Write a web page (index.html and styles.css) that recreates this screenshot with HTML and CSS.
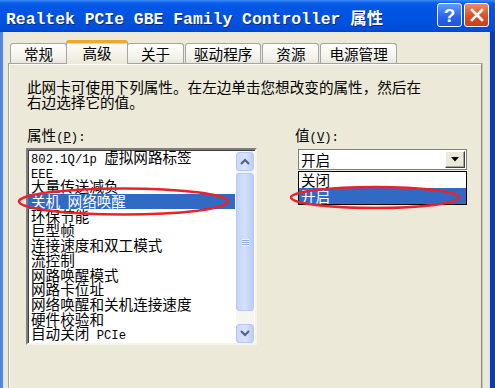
FILE: index.html
```html
<!DOCTYPE html>
<html lang="zh-CN">
<head>
<meta charset="utf-8">
<title>Realtek PCIe GBE Family Controller 属性</title>
<link rel="stylesheet" href="styles.css">
</head>
<body>
<div class="window">
  <div class="titlebar">
    <span class="title">Realtek PCIe GBE Family Controller 属性</span>
    <div class="tbtns">
      <span class="tbtn help">?</span>
      <span class="tbtn close"><svg width="14" height="14" viewBox="0 0 14 14"><path d="M2 2 L12 12 M12 2 L2 12" stroke="#fff" stroke-width="2.6" stroke-linecap="square"/></svg></span>
    </div>
  </div>
  <div class="frame">
    <div class="tabs">
      <div class="tab">常规</div>
      <div class="tab active">高级</div>
      <div class="tab">关于</div>
      <div class="tab">驱动程序</div>
      <div class="tab">资源</div>
      <div class="tab">电源管理</div>
    </div>
    <div class="panel">
      <p class="desc">此网卡可使用下列属性。在左边单击您想改变的属性，然后在<br>右边选择它的值。</p>
      <div class="cols">
        <div class="col-left">
          <div class="label">属性<span class="en">(<u>P</u>):</span></div>
          <div class="listbox">
            <ul class="items">
              <li><span class="en">802.1Q/1p </span>虚拟网路标签</li>
              <li><span class="en">EEE</span></li>
              <li>大量传送减负</li>
              <li class="sel">关机<span class="en"> </span>网络唤醒</li>
              <li>环保节能</li>
              <li>巨型帧</li>
              <li>连接速度和双工模式</li>
              <li>流控制</li>
              <li>网路唤醒模式</li>
              <li>网路卡位址</li>
              <li>网络唤醒和关机连接速度</li>
              <li>硬件校验和</li>
              <li>自动关闭<span class="en"> PCIe</span></li>
            </ul>
            <div class="vscroll">
              <div class="sbtn"><svg width="10" height="7" viewBox="0 0 10 7"><polyline points="1,6 5,2 9,6" fill="none" stroke="#4d6185" stroke-width="2"/></svg></div>
              <div class="thumb"><span class="grip"></span></div>
              <div class="track"></div>
              <div class="sbtn"><svg width="10" height="7" viewBox="0 0 10 7"><polyline points="1,1 5,5 9,1" fill="none" stroke="#4d6185" stroke-width="2"/></svg></div>
            </div>
          </div>
        </div>
        <div class="col-right">
          <div class="label">值<span class="en">(<u>V</u>):</span></div>
          <div class="combo">
            <span class="combo-text">开启</span>
            <span class="combo-btn"><svg width="8" height="5" viewBox="0 0 8 5"><polygon points="0,0 8,0 4,4.5" fill="#000"/></svg></span>
          </div>
          <ul class="droplist">
            <li>关闭</li>
            <li class="sel">开启</li>
          </ul>
        </div>
      </div>
    </div>
  </div>
  <svg class="mark mark1" width="215" height="31" viewBox="0 0 215 31"><ellipse cx="107.5" cy="15.5" rx="104.5" ry="13" fill="none" stroke="#e8232b" stroke-width="2.5"/></svg>
  <svg class="mark mark2" width="172" height="27" viewBox="0 0 172 27"><ellipse cx="86" cy="13.5" rx="84" ry="10.5" fill="none" stroke="#e8232b" stroke-width="2.5"/></svg>
</div>
</body>
</html>
```
FILE: styles.css
```css
* { box-sizing: border-box; }
html, body { margin: 0; padding: 0; }
body {
  width: 495px;
  height: 388px;
  overflow: hidden;
  background: #ece9d8;
  font-family: "Noto Sans CJK SC", sans-serif;
  font-size: 14.6px;
  color: #000;
}
.window {
  position: relative;
  height: 388px;
  display: flex;
  flex-direction: column;
}
.titlebar {
  height: 32px;
  flex: none;
  display: flex;
  justify-content: space-between;
  align-items: center;
  padding: 0 6px 0 6px;
  background: linear-gradient(#3a8af8 0, #0a5eea 3px, #0056e4 7px, #0053e0 20px, #004cd6 30px, #0045c4 32px);
}
.title {
  color: #fff;
  font-family: "Liberation Mono", "Noto Sans CJK SC", monospace;
  font-weight: bold;
  font-size: 16.4px;
  white-space: nowrap;
  text-shadow: 1px 1px 0 #0b2a7a;
  margin-top: 1px;
}
.tbtns {
  display: flex;
  gap: 2px;
  align-self: flex-start;
  margin-top: 3px;
}
.tbtn {
  width: 25px;
  height: 24px;
  border: 1px solid #fff;
  border-radius: 3px;
  display: flex;
  align-items: center;
  justify-content: center;
}
.help {
  background: linear-gradient(#5f9bff, #2863ec 60%, #1d55dc);
  color: #fff;
  font-family: "Liberation Sans", sans-serif;
  font-weight: bold;
  font-size: 19px;
  line-height: 1;
}
.close {
  background: linear-gradient(#ef8a6a, #d9502a 55%, #c8401c);
}
.frame {
  flex: 1;
  display: flex;
  flex-direction: column;
  border-left: 3px solid #4f86e8;
  border-right: 5px solid #0a3cc0;
  box-shadow: inset -1px 0 0 #d8e2f4;
  padding: 8px 8px 0 5px;
}
.tabs {
  display: flex;
  align-items: flex-end;
  height: 23px;
  padding-left: 2px;
}
.tab {
  min-width: 57px;
  height: 20px;
  padding: 0 8px;
  margin-right: 1px;
  text-align: center;
  line-height: 19px;
  white-space: nowrap;
  border: 1px solid #a5a69e;
  border-bottom: none;
  border-radius: 3px 3px 0 0;
  background: linear-gradient(#ffffff, #f3f2ec 70%, #e8e6dc);
}
.tab.active {
  position: relative;
  z-index: 1;
  height: 24px;
  min-width: 62px;
  margin: 0 -1px -1px -2px;
  line-height: 19px;
  border-top: 3px solid #f5a623;
  box-shadow: inset 0 1px 0 #ffd87a;
  background: linear-gradient(#fcfcfa, #ece9d8);
}
.panel {
  flex: 1;
  min-height: 340px;
  border: 1px solid #a5a69e;
  border-right-color: #8c8c86;
  box-shadow: inset 1px 1px 0 #fff, 1px 0 0 #c8c6bc;
  background: #ece9d8;
  padding: 15px 10px 0 17px;
}
.desc {
  margin: 0 0 0 1px;
  line-height: 15px;
  height: 30px;
  white-space: nowrap;
}
.cols {
  display: flex;
  margin-top: 18px;
  gap: 37px;
}
.col-left { width: 231px; }
.label {
  height: 15px;
  line-height: 15px;
  margin-left: 1px;
  white-space: nowrap;
}
.en {
  font-family: "Liberation Mono", monospace;
  font-size: 12.2px;
  line-height: 1;
}
.listbox {
  margin-top: 6px;
  width: 231px;
  height: 197px;
  display: flex;
  background: #fff;
  border: 2px solid;
  border-color: #7e7e7e #f4f3ee #f4f3ee #7e7e7e;
  box-shadow: inset 1px 1px 0 #404040;
}
.items {
  flex: 1;
  list-style: none;
  margin: 0;
  padding: 0;
  line-height: 14.7px;
  white-space: nowrap;
}
.items li {
  padding-left: 3px;
  height: 14.7px;
}
.items li.sel,
.droplist li.sel {
  background: #316ac5;
  color: #fff;
}
.vscroll {
  width: 18px;
  margin: 2px 1px 0 1px;
  display: flex;
  flex-direction: column;
  background: #f6f5f0;
}
.sbtn {
  height: 19px;
  flex: none;
  display: flex;
  align-items: center;
  justify-content: center;
  border: 1px solid #b6c8f4;
  border-radius: 3px;
  background: linear-gradient(90deg, #c9d8fc, #d9e4fd 50%, #bccff8);
}
.thumb {
  height: 138px;
  margin-top: 2px;
  flex: none;
  display: flex;
  align-items: center;
  justify-content: center;
  border: 1px solid #b6c8f4;
  border-radius: 3px;
  background: linear-gradient(90deg, #c4d5fb, #d4e0fd 50%, #b9cdf8);
}
.grip {
  width: 7px;
  height: 7px;
  background: repeating-linear-gradient(#eef3fe 0 1px, #8fa9e4 1px 2px);
}
.track { flex: 1; }
.col-right {
  display: flex;
  flex-direction: column;
}
.combo {
  margin: 7px 0 0 4px;
  width: 169px;
  height: 21px;
  display: flex;
  align-items: center;
  justify-content: space-between;
  background: #fff;
  border: 1px solid #7f7f7f;
  padding: 0 1px 0 2px;
}
.combo-text { line-height: 15px; }
.combo-btn {
  width: 20px;
  height: 17px;
  display: flex;
  align-items: center;
  justify-content: center;
  background: #ece9d8;
  border: 1px solid;
  border-color: #fff #404040 #404040 #fff;
  box-shadow: inset -1px -1px 0 #aca899;
}
.droplist {
  list-style: none;
  margin: 1px 0 0 4px;
  padding: 0;
  width: 169px;
  border: 1px solid #000;
  background: #fff;
}
.droplist li {
  height: 16px;
  line-height: 16px;
  padding-left: 2px;
}
.mark {
  position: absolute;
  pointer-events: none;
}
.mark1 { left: 16px; top: 186px; }
.mark2 { left: 289px; top: 184px; }
```
